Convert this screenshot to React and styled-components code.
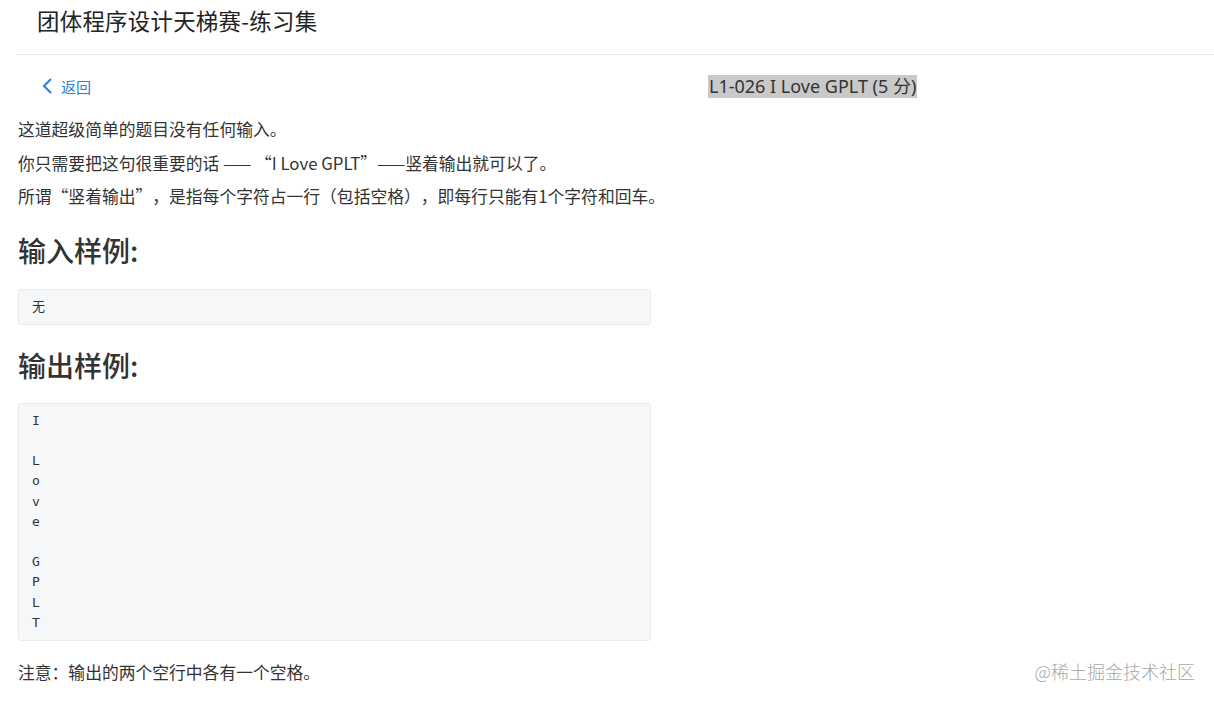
import React from 'react';
import styled, { createGlobalStyle } from 'styled-components';

const GlobalStyle = createGlobalStyle`
  html, body {
    margin: 0;
    padding: 0;
    background: #fff;
  }
  body {
    font-family: "Noto Sans", "Noto Sans CJK SC", sans-serif;
    color: #333;
    text-spacing-trim: space-all;
  }
`;

const Page = styled.div`
  position: relative;
  width: 1214px;
  height: 702px;
  overflow: hidden;
  background: #fff;
`;

const Header = styled.header`
  margin-left: 16px;
  height: 55px;
  border-bottom: 1px solid #ececec;
  display: flex;
  align-items: center;
  padding-left: 21px;
  padding-bottom: 15px;
  box-sizing: border-box;
`;

const SiteTitle = styled.h1`
  margin: 0;
  font-size: 22.4px;
  font-weight: 400;
  color: #222;
  font-family: "Noto Sans CJK SC", sans-serif;
  letter-spacing: 0.3px;
`;

const Main = styled.main`
  display: grid;
  grid-template-columns: 633px 1fr;
  column-gap: 57px;
  padding-left: 18px;
`;

const LeftColumn = styled.section`
  display: flex;
  flex-direction: column;
`;

const RightColumn = styled.aside`
  padding-top: 20px;
`;

const BackLink = styled.a`
  display: flex;
  align-items: center;
  gap: 9px;
  margin: 19px 0 0 24px;
  height: 24px;
  color: #2a7fd8;
  font-size: 15px;
  font-family: "Noto Sans CJK SC", sans-serif;
  text-decoration: none;
  cursor: pointer;
`;

const ProblemTitle = styled.h2`
  display: inline-block;
  margin: 0;
  font-size: 18px;
  line-height: 23px;
  font-weight: 400;
  color: #333;
  background: #c9c9c9;
  padding: 0 1px;
  font-family: "Noto Sans", "Noto Sans CJK SC", sans-serif;
`;

const Description = styled.div`
  margin-top: 15px;
`;

const Paragraph = styled.p`
  margin: 0;
  font-size: 16.8px;
  line-height: 33.5px;
  color: #333;
  white-space: nowrap;
  font-family: "Noto Sans CJK SC", sans-serif;
  text-spacing-trim: space-all;
`;

const SectionHeading = styled.h3`
  margin: ${({ $top }) => $top}px 0 0;
  font-size: 28px;
  line-height: 36px;
  font-weight: 500;
  color: #333;
  font-family: "Noto Sans CJK SC", sans-serif;
`;

const CodeBlock = styled.pre`
  margin: ${({ $top }) => $top}px 0 0;
  padding: 7px 13px;
  background: #f6f7f9;
  border: 1px solid #e9eaec;
  border-radius: 3px;
  font-family: "DejaVu Sans Mono", "Noto Sans CJK SC", monospace;
  font-size: 13px;
  line-height: 20.2px;
  color: #333;
  white-space: pre;
`;

const Note = styled.p`
  margin: 19px 0 0;
  font-size: 16.8px;
  line-height: 24px;
  color: #333;
  white-space: nowrap;
  font-family: "Noto Sans CJK SC", sans-serif;
  text-spacing-trim: space-all;
`;

const Watermark = styled.div`
  position: absolute;
  right: 19px;
  top: 658px;
  font-size: 18px;
  line-height: 26px;
  color: #a9a9a9;
  font-family: "Noto Sans CJK SC", sans-serif;
  font-weight: 300;
  pointer-events: none;
`;

const ChevronLeft = () => (
  <svg width="10" height="16" viewBox="0 0 10 16" fill="none">
    <path d="M8.5 1.5 2 8l6.5 6.5" stroke="currentColor" strokeWidth="2" strokeLinecap="round" strokeLinejoin="round" />
  </svg>
);

const output = ['I', ' ', 'L', 'o', 'v', 'e', ' ', 'G', 'P', 'L', 'T'].join('\n');

export default function App() {
  return (
    <Page>
      <GlobalStyle />
      <Header>
        <SiteTitle>团体程序设计天梯赛-练习集</SiteTitle>
      </Header>
      <Main>
        <LeftColumn>
          <BackLink>
            <ChevronLeft />
            返回
          </BackLink>
          <Description>
            <Paragraph>这道超级简单的题目没有任何输入。</Paragraph>
            <Paragraph>你只需要把这句很重要的话 —— “I Love GPLT”——竖着输出就可以了。</Paragraph>
            <Paragraph>所谓“竖着输出”，是指每个字符占一行（包括空格），即每行只能有1个字符和回车。</Paragraph>
          </Description>
          <SectionHeading $top={18}>输入样例:</SectionHeading>
          <CodeBlock $top={21}>无</CodeBlock>
          <SectionHeading $top={22}>输出样例:</SectionHeading>
          <CodeBlock $top={20}>{output}</CodeBlock>
          <Note>注意：输出的两个空行中各有一个空格。</Note>
        </LeftColumn>
        <RightColumn>
          <ProblemTitle>L1-026 I Love GPLT (5 分)</ProblemTitle>
        </RightColumn>
      </Main>
      <Watermark>@稀土掘金技术社区</Watermark>
    </Page>
  );
}
